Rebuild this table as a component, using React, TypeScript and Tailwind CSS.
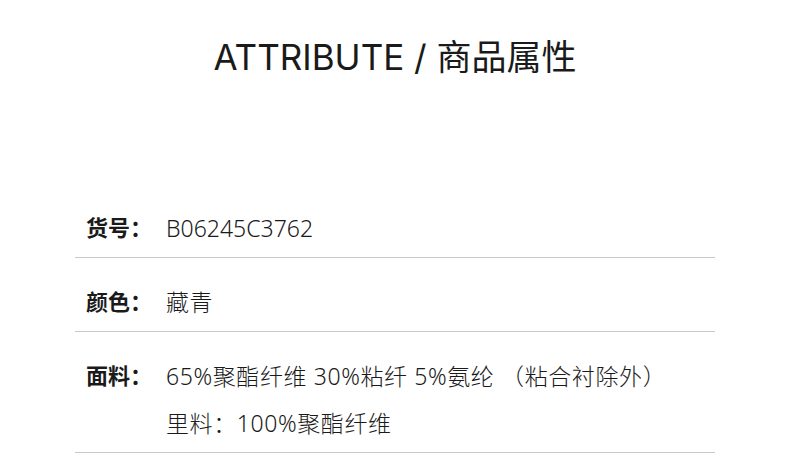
const rows: { label: string; lines: string[] }[] = [
  { label: "货号：", lines: ["B06245C3762"] },
  { label: "颜色：", lines: ["藏青"] },
  {
    label: "面料：",
    lines: ["65%聚酯纤维 30%粘纤 5%氨纶 （粘合衬除外）", "里料：100%聚酯纤维"],
  },
];

// latin-only values sit tighter than the chinese ones
const hasCjk = (s: string) => /[\u3000-\u9fff\uff00-\uffef]/.test(s);

export default function App() {
  return (
    <div
      className="w-[790px] h-[471px] bg-white text-[#1a1a1a] overflow-hidden"
      style={{ fontFamily: 'Inter, "Noto Sans CJK SC", sans-serif' }}
    >
      <h1 className="pt-[37px] text-center text-[35px] leading-[40px] font-normal">
        ATTRIBUTE / 商品属性
      </h1>

      <div className="mt-[107px] mx-[75px] w-[640px]">
        {rows.map((row) => (
          <div
            key={row.label}
            className="flex pt-[28px] pb-[13px] border-b border-[#c8c8c8]"
          >
            <div className="w-[91px] pl-[11px] text-[22px] leading-[32px] font-bold">
              {row.label}
            </div>
            <div
              className="flex flex-col gap-[15px] text-[23px] leading-[32px] font-light"
              style={{ fontFamily: '"Noto Sans", "Noto Sans CJK SC", sans-serif' }}
            >
              {row.lines.map((line) => (
                <p key={line} className={hasCjk(line) ? "tracking-[0.6px]" : ""}>
                  {line}
                </p>
              ))}
            </div>
          </div>
        ))}
      </div>
    </div>
  );
}
